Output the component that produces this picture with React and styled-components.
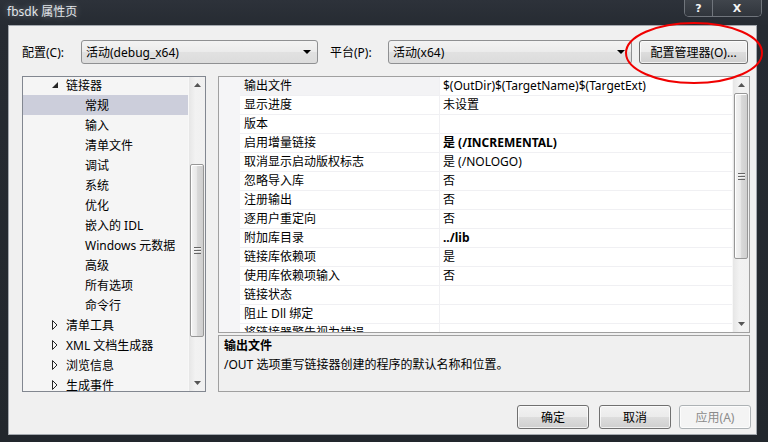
import React from "react";
import styled, { createGlobalStyle } from "styled-components";

const GlobalStyle = createGlobalStyle`
  html, body {
    margin: 0;
    padding: 0;
  }
  body {
    width: 768px;
    height: 442px;
    overflow: hidden;
    background: #22272d;
    font-family: "Noto Sans", "Noto Sans CJK SC", sans-serif;
    font-size: 12px;
    color: #000;
  }
  * {
    box-sizing: border-box;
  }
`;

const Window = styled.div`
  position: relative;
  width: 768px;
  height: 442px;
  display: flex;
  flex-direction: column;
  background: linear-gradient(180deg, #2d323a 0px, #262b32 26px, #22272d 100%);
`;

const TitleBar = styled.div`
  height: 25px;
  display: flex;
  align-items: flex-start;
  padding: 0 6px 0 7px;
`;

const Title = styled.div`
  flex: 1;
  line-height: 24px;
  color: #e2e6ea;
  font-size: 12px;
  text-shadow: 0 0 6px rgba(220, 230, 240, 0.45);
`;

const CaptionButtons = styled.div`
  display: flex;
  height: 17px;
  border: 1px solid #70757c;
  border-top: none;
  border-radius: 0 0 5px 5px;
  overflow: hidden;
`;

const CaptionButton = styled.div`
  width: ${(p) => p.$w}px;
  display: flex;
  align-items: center;
  justify-content: center;
  background: linear-gradient(180deg, #40454c, #30353c);
  color: #f4f4f4;
  font-family: "DejaVu Sans", sans-serif;
  font-weight: bold;
  font-size: 11px;
  & + & {
    border-left: 1px solid #70757c;
  }
`;

const Client = styled.div`
  flex: 1;
  margin: 0 11px 7px 8px;
  background: #f0f0f0;
  border: 1px solid #a3a8ae;
  display: flex;
  flex-direction: column;
  padding: 14px 6px 0 13px;
`;

const TopRow = styled.div`
  height: 24px;
  display: flex;
  align-items: center;
`;

const Label = styled.div`
  width: ${(p) => p.$w}px;
  white-space: nowrap;
`;

const Select = styled.div`
  width: ${(p) => p.$w}px;
  height: 24px;
  display: flex;
  align-items: center;
  padding: 0 6px 0 4px;
  border: 1px solid #8f9092;
  border-radius: 3px;
  background: linear-gradient(180deg, #f3f3f3 0%, #ebebeb 50%, #e1e1e1 51%, #dcdcdc 100%);
  margin-right: ${(p) => p.$mr || 0}px;
  span {
    flex: 1;
    white-space: nowrap;
  }
`;

const PushButton = styled.div`
  width: ${(p) => p.$w}px;
  height: 24px;
  display: flex;
  align-items: center;
  justify-content: center;
  border: 1px solid ${(p) => (p.$disabled ? "#adb2b5" : "#707070")};
  border-radius: 3px;
  color: ${(p) => (p.$disabled ? "#8b8b8b" : "#000")};
  background: ${(p) =>
    p.$disabled
      ? "#f4f4f4"
      : "linear-gradient(180deg, #f2f2f2 0%, #ebebeb 50%, #dddddd 51%, #cfcfcf 100%)"};
  box-shadow: inset 0 0 0 1px rgba(255, 255, 255, 0.7);
  white-space: nowrap;
`;

const Main = styled.div`
  margin-top: 12px;
  height: 316px;
  display: flex;
  gap: 12px;
`;

const TreePanel = styled.div`
  width: 184px;
  border: 1px solid #828790;
  background: #f5f5f5;
  display: flex;
  overflow: hidden;
`;

const TreeList = styled.div`
  flex: 1;
  overflow: hidden;
  margin-top: -2px;
`;

const TreeRow = styled.div`
  height: 20px;
  display: flex;
  align-items: center;
  padding-left: ${(p) => (p.$level ? 62 : 29)}px;
  background: ${(p) => (p.$selected ? "#cccedb" : "transparent")};
  white-space: nowrap;
`;

const Expander = styled.div`
  width: 14px;
  display: flex;
  align-items: center;
`;

const ScrollBar = styled.div`
  width: 17px;
  display: flex;
  flex-direction: column;
  background: linear-gradient(90deg, #e6e6e6, #f2f2f2 40%, #f0f0f0);
  border-left: 1px solid #f8f8f8;
`;

const ArrowBox = styled.div`
  height: 16px;
  display: flex;
  align-items: center;
  justify-content: center;
  flex-shrink: 0;
`;

const Track = styled.div`
  flex: 1;
  display: flex;
  flex-direction: column;
  padding: 0 1px;
`;

const Thumb = styled.div`
  margin-top: ${(p) => p.$top}px;
  height: ${(p) => p.$h}px;
  border: 1px solid #979797;
  border-radius: 2px;
  background: linear-gradient(90deg, #f4f4f4 0%, #e9e9e9 45%, #d8d8d8 55%, #cfcfcf 100%);
  box-shadow: inset 1px 1px 0 #ffffff;
  display: flex;
  align-items: center;
  justify-content: center;
`;

const Grip = styled.div`
  width: 7px;
  height: 7px;
  background: repeating-linear-gradient(180deg, #666 0 1px, #f4f4f4 1px 2px, transparent 2px 3px);
`;

const RightColumn = styled.div`
  flex: 1;
  display: flex;
  flex-direction: column;
  gap: 2px;
`;

const Grid = styled.div`
  height: 257px;
  border: 1px solid #a0a0a0;
  background: #ffffff;
  display: flex;
  overflow: hidden;
`;

const GridMargin = styled.div`
  width: 21px;
  background: #f5f5f7;
`;

const GridRows = styled.div`
  flex: 1;
  overflow: hidden;
`;

const GridRow = styled.div`
  height: 19px;
  display: grid;
  grid-template-columns: 199px 1fr;
  border-bottom: 1px solid #f0f0f3;
  white-space: nowrap;
`;

const NameCell = styled.div`
  padding-left: 4px;
  line-height: 18px;
  background: ${(p) => (p.$selected ? "#f3f3f5" : "transparent")};
  overflow: hidden;
`;

const ValueCell = styled.div`
  padding-left: 3px;
  line-height: 18px;
  border-left: 1px solid #f0f0f3;
  font-weight: ${(p) => (p.$bold ? "bold" : "normal")};
  overflow: hidden;
`;

const Description = styled.div`
  flex: 1;
  border: 1px solid #a0a0a0;
  background: #f0f0f0;
  padding: 0 5px;
  line-height: 19px;
`;

const DescTitle = styled.div`
  font-weight: bold;
`;

const ButtonRow = styled.div`
  margin-top: 13px;
  margin-right: -1px;
  display: flex;
  justify-content: flex-end;
  gap: 8px;
`;

const Annotation = styled.svg`
  position: absolute;
  left: 624px;
  top: 21px;
  pointer-events: none;
`;

const ExpandedIcon = () => (
  <svg width="6" height="6" viewBox="0 0 6 6">
    <polygon points="6,0 6,6 0,6" fill="#262626" />
  </svg>
);

const CollapsedIcon = () => (
  <svg width="6" height="10" viewBox="0 0 6 10">
    <polygon points="0.5,0.5 5,5 0.5,9.5" fill="none" stroke="#262626" strokeWidth="1" />
  </svg>
);

const ArrowGlyph = ({ down }) => (
  <svg width="7" height="4" viewBox="0 0 7 4">
    <polygon points={down ? "0,0 7,0 3.5,4" : "0,4 7,4 3.5,0"} fill="#555" />
  </svg>
);

const DropArrow = () => (
  <svg width="8" height="4" viewBox="0 0 8 4">
    <polygon points="0,0 8,0 4,4" fill="#000" />
  </svg>
);

const VScroll = ({ top, height }) => (
  <ScrollBar>
    <ArrowBox>
      <ArrowGlyph />
    </ArrowBox>
    <Track>
      <Thumb $top={top} $h={height}>
        <Grip />
      </Thumb>
    </Track>
    <ArrowBox>
      <ArrowGlyph down />
    </ArrowBox>
  </ScrollBar>
);

const treeItems = [
  { label: "链接器", level: 0, open: true },
  { label: "常规", level: 1, selected: true },
  { label: "输入", level: 1 },
  { label: "清单文件", level: 1 },
  { label: "调试", level: 1 },
  { label: "系统", level: 1 },
  { label: "优化", level: 1 },
  { label: "嵌入的 IDL", level: 1 },
  { label: "Windows 元数据", level: 1 },
  { label: "高级", level: 1 },
  { label: "所有选项", level: 1 },
  { label: "命令行", level: 1 },
  { label: "清单工具", level: 0 },
  { label: "XML 文档生成器", level: 0 },
  { label: "浏览信息", level: 0 },
  { label: "生成事件", level: 0 },
];

const props = [
  ["输出文件", "$(OutDir)$(TargetName)$(TargetExt)"],
  ["显示进度", "未设置"],
  ["版本", ""],
  ["启用增量链接", "是 (/INCREMENTAL)", true],
  ["取消显示启动版权标志", "是 (/NOLOGO)"],
  ["忽略导入库", "否"],
  ["注册输出", "否"],
  ["逐用户重定向", "否"],
  ["附加库目录", "../lib", true],
  ["链接库依赖项", "是"],
  ["使用库依赖项输入", "否"],
  ["链接状态", ""],
  ["阻止 Dll 绑定", ""],
  ["将链接器警告视为错误", ""],
];

const App = () => {
  return (
    <>
      <GlobalStyle />
      <Window>
        <TitleBar>
          <Title>fbsdk 属性页</Title>
          <CaptionButtons>
            <CaptionButton $w={27}>?</CaptionButton>
            <CaptionButton $w={49}>X</CaptionButton>
          </CaptionButtons>
        </TitleBar>

        <Client>
          <TopRow>
            <Label $w={59}>配置(C):</Label>
            <Select $w={237} $mr={12}>
              <span>活动(debug_x64)</span>
              <DropArrow />
            </Select>
            <Label $w={58}>平台(P):</Label>
            <Select $w={244} $mr={7}>
              <span>活动(x64)</span>
              <DropArrow />
            </Select>
            <PushButton $w={109}>配置管理器(O)...</PushButton>
          </TopRow>

          <Main>
            <TreePanel>
              <TreeList>
                {treeItems.map((item) => (
                  <TreeRow key={item.label} $level={item.level} $selected={item.selected}>
                    {item.level === 0 && (
                      <Expander>{item.open ? <ExpandedIcon /> : <CollapsedIcon />}</Expander>
                    )}
                    {item.label}
                  </TreeRow>
                ))}
              </TreeList>
              <VScroll top={71} height={173} />
            </TreePanel>

            <RightColumn>
              <Grid>
                <GridMargin />
                <GridRows>
                  {props.map(([name, value, bold], i) => (
                    <GridRow key={name}>
                      <NameCell $selected={i === 0}>{name}</NameCell>
                      <ValueCell $bold={bold}>{value}</ValueCell>
                    </GridRow>
                  ))}
                </GridRows>
                <VScroll top={0} height={166} />
              </Grid>
              <Description>
                <DescTitle>输出文件</DescTitle>
                <div>/OUT 选项重写链接器创建的程序的默认名称和位置。</div>
              </Description>
            </RightColumn>
          </Main>

          <ButtonRow>
            <PushButton $w={72}>确定</PushButton>
            <PushButton $w={72} style={{ marginLeft: 2 }}>
              取消
            </PushButton>
            <PushButton $w={72} $disabled>
              应用(A)
            </PushButton>
          </ButtonRow>
        </Client>

        <Annotation width="140" height="64" viewBox="0 0 140 64">
          <ellipse cx="70" cy="32" rx="68" ry="30" fill="none" stroke="#f00000" strokeWidth="2" />
        </Annotation>
      </Window>
    </>
  );
};

export default App;
